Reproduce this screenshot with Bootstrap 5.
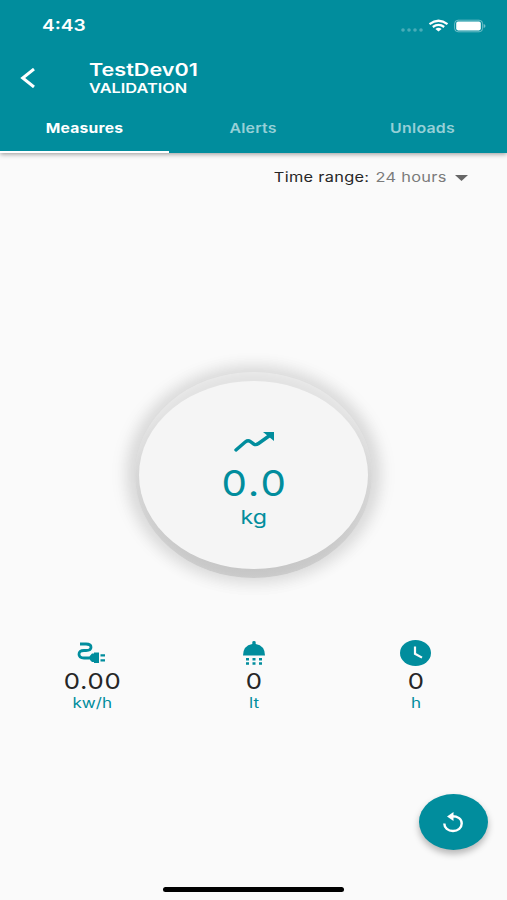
<!DOCTYPE html>
<html lang="en">
<head>
<meta charset="utf-8">
<meta name="viewport" content="width=device-width, initial-scale=1">
<title>TestDev01</title>
<link rel="stylesheet" href="https://cdn.jsdelivr.net/npm/bootstrap@5.3.0/dist/css/bootstrap.min.css">
<style>
:root { --teal: #018d9d; }
body { font-family: Inter, "Liberation Sans", sans-serif; background: #fafafa; color: #262626; line-height: 1; }
svg { display: block; }
.screen { height: 900px; }
.wide { display: inline-block; white-space: nowrap; transform: scaleX(1.22); }
.from-left { transform-origin: left center; }
.from-right { transform-origin: right center; }
.top-area { background: var(--teal); height: 153px; box-shadow: 0 1px 5px rgba(0,0,0,.42); }
.status-row { height: 52px; padding: 0 21px 0 42px; }
.clock-text { font-size: 15.7px; font-weight: 600; }
.title-row { height: 51px; padding-left: 20px; }
.title-block { margin-left: 53px; }
.device-name { font-size: 17.700px; font-weight: 600; line-height: 18px; }
.device-mode { font-size: 13.4px; font-weight: 600; line-height: 14px; margin-top: 2px; }
.tab-row { height: 50px; }
.tab-row .nav-link { height: 50px; padding: 3px 0 0; font-size: 13.5px; font-weight: 600; letter-spacing: .2px; color: #96d0d7; border-bottom: 2px solid transparent; border-radius: 0; }
.tab-row .nav-link.active { color: #fff; font-weight: 700; border-color: #fff; }
.tab-row .nav-link .wide { transform: scaleX(1.18); }
.tab-row .nav-link.active .wide { transform: scaleX(1.16); }
.range-row { height: 50px; padding-right: 39px; font-size: 13.4px; letter-spacing: .25px; }
.range-value { color: #7b7b7b; margin-left: 5px; }
.dial-area { padding-top: 169px; }
.dial-rim { width: 237px; height: 206px; border-radius: 50%; padding-top: 9px;
  background: linear-gradient(rgba(214,214,214,0) 20%, rgba(221,221,221,.6) 60%, #d8d8d8 100%);
  box-shadow: 0 0 14px 8px rgba(0,0,0,.05); }
.dial-face { width: 229px; height: 188px; border-radius: 50%; background: #f5f5f5; color: var(--teal); padding-top: 50px;
  box-shadow: 0 -1px 18px 12px rgba(0,0,0,.1); }
.dial-value { font-size: 36px; line-height: 36px; margin-top: 12px; letter-spacing: 1.8px; margin-right: -1.8px; transform: scaleX(1.12); }
.dial-unit { font-size: 19px; line-height: 24px; margin-top: 5px; }
.stats { padding: 0 10px 0 11px; margin-top: 60px; }
.stat-icon { height: 27px; color: var(--teal); }
.stat-icon svg { position: relative; top: 1px; }
.stat-value { font-size: 22px; line-height: 28px; margin-top: 2px; }
.stat-value .wide { letter-spacing: .6px; margin-right: -.6px; transform: scaleX(1.17); }
.stat-unit { font-size: 14px; line-height: 16px; color: var(--teal); }
.fab-row { padding-right: 19px; margin-bottom: 37px; }
.reload { width: 69px; height: 56px; padding: 0; border: 0; border-radius: 50%; background: var(--teal) !important; box-shadow: 0 4px 7px rgba(0,0,0,.28); }
.home-bar { width: 181px; height: 5px; border-radius: 3px; background: #000; margin-bottom: 8px; }
</style>
</head>
<body>
<div class="screen d-flex flex-column overflow-hidden">
  <header class="top-area text-white flex-shrink-0">
    <div class="status-row d-flex align-items-center justify-content-between">
      <span class="clock-text wide from-left">4:43</span>
      <svg width="86" height="16" viewBox="0 0 86 16" fill="#fff">
        <g opacity=".28"><circle cx="3" cy="12" r="1.800"/><circle cx="9" cy="12" r="1.800"/><circle cx="15" cy="12" r="1.800"/><circle cx="21" cy="12" r="1.800"/></g>
        <g fill="none" stroke="#fff" stroke-width="2.200"><path d="M29.500 6.100Q38.500-.6 47.500 6.100"/><path d="M32.800 9Q38.500 4.700 44.200 9"/></g>
        <path d="M35.400 10.900Q38.500 8.700 41.600 10.900L38.500 13.600Z"/>
        <rect x="54.600" y="2.200" width="28" height="11.600" rx="3.500" fill="none" stroke="#fff" stroke-opacity=".42"/>
        <rect x="56.200" y="3.600" width="24.600" height="8.800" rx="1.800"/>
        <path d="M83.700 6V10Q85.500 9.500 85.500 8T83.700 6" opacity=".45"/>
      </svg>
    </div>
    <div class="title-row d-flex align-items-center">
      <svg width="16" height="20" viewBox="0 0 16 20" fill="none" stroke="#fff" stroke-width="3"><path d="M14 1L2.700 10 14 19"/></svg>
      <div class="title-block d-flex flex-column align-items-start">
        <span class="device-name wide from-left">TestDev01</span>
        <span class="device-mode wide from-left">VALIDATION</span>
      </div>
    </div>
    <nav class="nav nav-fill tab-row">
      <a class="nav-link active col-4 d-flex align-items-center justify-content-center" href="#"><span class="wide">Measures</span></a>
      <a class="nav-link col-4 d-flex align-items-center justify-content-center" href="#"><span class="wide">Alerts</span></a>
      <a class="nav-link col-4 d-flex align-items-center justify-content-center" href="#"><span class="wide">Unloads</span></a>
    </nav>
  </header>
  <main class="flex-grow-1 d-flex flex-column">
    <div class="range-row d-flex align-items-center justify-content-end">
      <span class="wide from-right">Time range:<span class="range-value">24 hours</span></span>
      <svg class="ms-2" width="13" height="6" viewBox="0 0 13 6"><path d="M0 0H13L6.500 6Z" fill="#666"/></svg>
    </div>
    <section class="dial-area d-flex justify-content-center">
      <div class="dial-rim d-flex justify-content-center">
        <div class="dial-face d-flex flex-column align-items-center flex-shrink-0">
          <svg width="42" height="22" viewBox="0 0 42 22"><path d="M3 19L12.500 10.800Q15 8.800 17.500 10.600L21 13.200Q23 14.300 25.500 12.500L36 5" fill="none" stroke="currentColor" stroke-width="3.400" stroke-linecap="round"/><path d="M30 1H41V10Z" fill="currentColor"/></svg>
          <span class="dial-value wide">0.0</span>
          <span class="dial-unit wide">kg</span>
        </div>
      </div>
    </section>
    <section class="stats row g-0 text-center">
      <div class="col-4">
        <div class="stat-icon d-flex justify-content-center align-items-center">
          <svg width="29" height="22" viewBox="0 0 29 22" fill="currentColor"><path d="M3 2H9Q14 2 14 5.200T9 8.500H7Q2 8.500 2 12.200T7 16H12" fill="none" stroke="currentColor" stroke-width="2.800"/><path d="M11 16L15 11.500H17V10.500H22V21H17V20H15Z"/><path d="M23.500 12.300H28V14.500H23.500ZM23.500 17.300H28V19.500H23.500Z"/></svg>
        </div>
        <div class="stat-value"><span class="wide">0.00</span></div>
        <div class="stat-unit"><span class="wide">kw/h</span></div>
      </div>
      <div class="col-4">
        <div class="stat-icon d-flex justify-content-center align-items-center">
          <svg width="22" height="24" viewBox="0 0 22 24" fill="currentColor"><path d="M0 14.500Q0 4.500 9.300 2.900V1.200Q9.300 0 11 0T12.700 1.200V2.900Q22 4.500 22 14.500Z"/><path d="M3 17H6V19.400H3ZM9.500 17H12.500V19.400H9.500ZM16 17H19V19.400H16ZM3 21.300H6V23.700H3ZM9.500 21.300H12.500V23.700H9.500ZM16 21.300H19V23.700H16Z"/></svg>
        </div>
        <div class="stat-value"><span class="wide">0</span></div>
        <div class="stat-unit"><span class="wide">lt</span></div>
      </div>
      <div class="col-4">
        <div class="stat-icon d-flex justify-content-center align-items-center">
          <svg width="31" height="26" viewBox="0 0 31 26"><ellipse cx="15.500" cy="13" rx="15.500" ry="13" fill="currentColor"/><path d="M15 6.500V13.800L22 17.600" fill="none" stroke="#fafafa" stroke-width="2.200"/></svg>
        </div>
        <div class="stat-value"><span class="wide">0</span></div>
        <div class="stat-unit"><span class="wide">h</span></div>
      </div>
    </section>
    <div class="fab-row d-flex justify-content-end mt-auto">
      <button class="reload btn d-flex align-items-center justify-content-center" type="button" aria-label="Reload">
        <svg width="22" height="21" viewBox="0 0 22 21"><path d="M1.300 11.500C1.300 15.800 5 19 10 19S18.700 15.800 18.700 11.500 15 4.300 9 4.300" fill="none" stroke="#fff" stroke-width="2.400"/><path d="M10.500 0V9L4 4.400Z" fill="#fff"/></svg>
      </button>
    </div>
    <div class="home-bar mx-auto"></div>
  </main>
</div>
<script src="https://cdn.jsdelivr.net/npm/bootstrap@5.3.0/dist/js/bootstrap.bundle.min.js"></script>
</body>
</html>
